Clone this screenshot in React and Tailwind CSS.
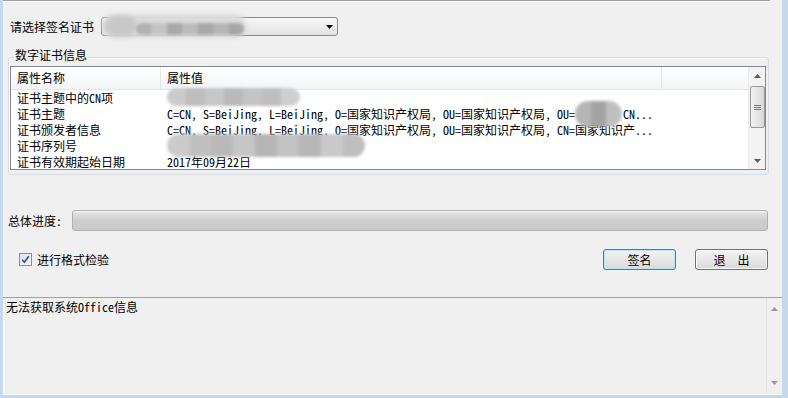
import React from 'react'

const font = "font-['Noto_Sans_Mono_CJK_SC','Noto_Sans_CJK_SC',monospace]"

const rows = [
  { name: '证书主题中的CN项', value: '' },
  { name: '证书主题', value: 'C=CN, S=BeiJing, L=BeiJing, O=国家知识产权局, OU=国家知识产权局, OU=        CN...' },
  { name: '证书颁发者信息', value: 'C=CN, S=BeiJing, L=BeiJing, O=国家知识产权局, OU=国家知识产权局, CN=国家知识产...' },
  { name: '证书序列号', value: '' },
  { name: '证书有效期起始日期', value: '2017年09月22日' },
]

const ArrowUp = ({ color = '#5a5a5a' }) => (
  <svg width="7" height="4" viewBox="0 0 7 4">
    <path d="M0 4 L3.5 0 L7 4 Z" fill={color} />
  </svg>
)

const ArrowDown = ({ color = '#5a5a5a' }) => (
  <svg width="7" height="4" viewBox="0 0 7 4">
    <path d="M0 0 L7 0 L3.5 4 Z" fill={color} />
  </svg>
)

// mosaic blur used to hide private values
const Mosaic = ({ className, blocks }) => (
  <div className={`absolute flex overflow-hidden rounded-full blur-[1.5px] ${className}`}>
    {blocks.map((b, i) => (
      <div key={i} className={`h-full flex-1 ${b}`} />
    ))}
  </div>
)

const App = () => {
  return (
    <div className={`w-[788px] h-[398px] pl-[3px] pr-[6px] pb-[3px] bg-[#c6d8ec] text-black text-[12px] ${font}`}>
      <div className="h-full bg-[#f0f0f0] flex flex-col">
        {/* top separator */}
        <div className="w-[767px] h-px bg-[#a0a0a0]" />
        <div className="w-[767px] h-px bg-white" />

        {/* certificate selector */}
        <div className="mt-[15px] flex items-center h-[19px] pl-[7px]">
          <span className="w-[91px] leading-[14px]">请选择签名证书</span>
          <div className="relative w-[237px] h-[19px] rounded-[3px] border border-[#8a8a8a] bg-linear-to-b from-[#f7f7f7] to-[#e2e2e2] flex items-center justify-end pr-[4px]">
            <div className="absolute left-0 top-[-4px] w-[144px] h-[24px] rounded-full bg-[#dcdcdc] blur-[2px]" />
            <div className="absolute left-[3px] top-[-2px] w-[32px] h-[20px] rounded-full bg-[#c8c8c8] blur-[2px]" />
            <Mosaic
              className="left-[34px] top-[5px] w-[108px] h-[12px]"
              blocks={['bg-[#b2b2b2]', 'bg-[#c4c4c4]', 'bg-[#a9a9a9]', 'bg-[#bcbcbc]', 'bg-[#a8a8a8]', 'bg-[#b6b6b6]', 'bg-[#a6a6a6]']}
            />
            <svg width="7" height="4" viewBox="0 0 7 4" className="relative">
              <path d="M0 0 L7 0 L3.5 4 Z" fill="#000" />
            </svg>
          </div>
        </div>

        {/* group box */}
        <div className="relative mt-[21px] ml-[5px] w-[761px] h-[118px] rounded-[3px] border border-[#d5dfe5] shadow-[inset_1px_1px_0_#fff]">
          <span className="absolute left-[5px] top-[-10px] px-px leading-[14px] bg-[#f0f0f0]">数字证书信息</span>

          <div className="mt-[8px] ml-px w-[756px] h-[104px] border border-[#828790] bg-white flex">
            <div className="relative flex-1 overflow-hidden">
              {/* header */}
              <div className="flex h-[23px] bg-linear-to-b from-white to-[#f3f4f6] border-b border-[#e5e5e5]">
                <div className="w-[150px] border-r border-[#e5e5e5] pl-[6px] flex items-center">属性名称</div>
                <div className="w-[501px] border-r border-[#e5e5e5] pl-[6px] flex items-center">属性值</div>
                <div className="flex-1" />
              </div>
              {rows.map((r) => (
                <div key={r.name} className="flex h-[16px] items-center leading-[14px]">
                  <div className="w-[150px] pl-[6px] whitespace-nowrap">{r.name}</div>
                  <div className="w-[501px] pl-[6px] whitespace-pre">{r.value}</div>
                </div>
              ))}
              <Mosaic
                className="left-[156px] top-[21px] w-[133px] h-[18px]"
                blocks={['bg-[#cbcbcb]', 'bg-[#bdbdbd]', 'bg-[#c7c7c7]', 'bg-[#b9b9b9]', 'bg-[#c4c4c4]', 'bg-[#bebebe]', 'bg-[#cfcfcf]']}
              />
              <Mosaic
                className="left-[564px] top-[34px] w-[47px] h-[26px]"
                blocks={['bg-[#b5b5b5]', 'bg-[#a3a3a3]', 'bg-[#c0c0c0]']}
              />
              <Mosaic
                className="left-[156px] top-[67px] w-[198px] h-[23px]"
                blocks={['bg-[#cbcbcb]', 'bg-[#c0c0c0]', 'bg-[#b9b9b9]', 'bg-[#c6c6c6]', 'bg-[#b5b5b5]', 'bg-[#c2c2c2]', 'bg-[#b7b7b7]', 'bg-[#c9c9c9]', 'bg-[#bfbfbf]']}
              />
            </div>

            {/* scrollbar */}
            <div className="w-[17px] bg-[#f3f3f3] border-l border-[#eaeaea] flex flex-col items-center">
              <div className="h-[17px] flex items-center justify-center"><ArrowUp /></div>
              <div className="w-[15px] h-[42px] mt-[2px] rounded-[2px] border border-[#9a9a9a] bg-linear-to-r from-[#f2f2f2] to-[#d8d8d8] flex flex-col items-center justify-center gap-px">
                <div className="w-[7px] h-px bg-[#7a7a7a]" />
                <div className="w-[7px] h-px bg-[#7a7a7a]" />
                <div className="w-[7px] h-px bg-[#7a7a7a]" />
              </div>
              <div className="flex-1" />
              <div className="h-[17px] flex items-center justify-center"><ArrowDown /></div>
            </div>
          </div>
        </div>

        {/* progress */}
        <div className="mt-[35px] flex items-center h-[21px] pl-[5px]">
          <span className="w-[64px] leading-[14px]">总体进度:</span>
          <div className="w-[696px] h-[21px] rounded-[3px] border border-[#b2b2b2] bg-linear-to-b from-[#e6e6e6] via-[#cfcfcf] to-[#c8c8c8] shadow-[inset_0_1px_0_#f4f4f4]" />
        </div>

        {/* options and buttons */}
        <div className="mt-[18px] flex items-center h-[21px] pl-[16px] pr-[14px]">
          <div className="w-[13px] h-[13px] border border-[#8e8f8f] bg-linear-to-br from-[#dfe3ec] to-[#f6f7f9] flex items-center justify-center">
            <svg width="9" height="9" viewBox="0 0 9 9">
              <path d="M1.2 4.8 L3.4 7.2 L7.8 1.2" fill="none" stroke="#3c4f8c" strokeWidth="1.7" />
            </svg>
          </div>
          <span className="ml-[5px] leading-[14px]">进行格式检验</span>
          <div className="flex-1" />
          <button className="w-[73px] h-[21px] rounded-[3px] border border-[#3c7fb1] bg-linear-to-b from-[#f4f4f4] to-[#dadada] shadow-[inset_0_0_0_1px_#bfe4f9] leading-[14px]">
            签名
          </button>
          <button className="ml-[19px] w-[73px] h-[21px] rounded-[3px] border border-[#707070] bg-linear-to-b from-[#f4f4f4] to-[#dadada] shadow-[inset_0_0_0_1px_#fafafa] leading-[14px] whitespace-pre">
            退  出
          </button>
        </div>

        {/* message area */}
        <div className="mt-[27px] flex-1 flex border-t border-[#a0a0a0]">
          <div className="flex-1 pl-[2px] pt-[2px] leading-[14px] border-l border-white">无法获取系统Office信息</div>
          <div className="w-[16px] border-l border-[#e2e2e2] flex flex-col items-center justify-between py-[9px]">
            <ArrowUp color="#9a9a9a" />
            <ArrowDown color="#9a9a9a" />
          </div>
        </div>
        <div className="h-px bg-white" />
      </div>
    </div>
  )
}

export default App
